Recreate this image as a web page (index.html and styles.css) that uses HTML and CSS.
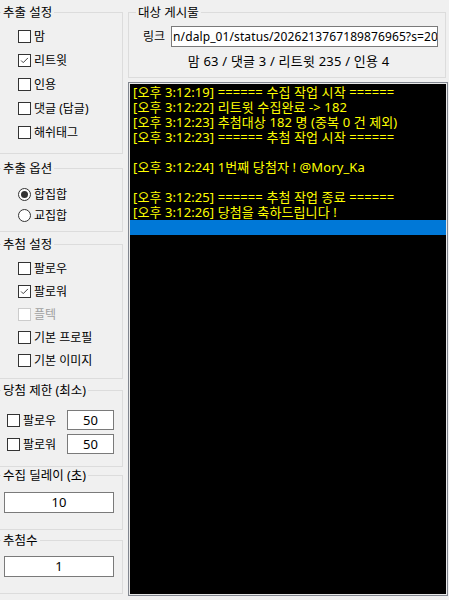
FILE: index.html
```html
<!DOCTYPE html>
<html lang="ko">
<head>
    <meta charset="UTF-8">
    <meta name="viewport" content="width=device-width, initial-scale=1.0">
    <title>추첨기</title>
    <link rel="stylesheet" href="styles.css">
</head>
<body>
    <div class="app">
        <div class="side">
            <fieldset class="group g-extract">
                <legend>추출 설정</legend>
                <div class="rows rows-24">
                    <label class="opt"><span class="box"></span>맘</label>
                    <label class="opt"><span class="box"><svg viewBox="0 0 13 13"><path d="M2.5 6.5 L5 9 L10.5 3.5" fill="none" stroke="#333" stroke-width="1.1"/></svg></span>리트윗</label>
                    <label class="opt"><span class="box"></span>인용</label>
                    <label class="opt"><span class="box"></span>댓글 (답글)</label>
                    <label class="opt"><span class="box"></span>해쉬태그</label>
                </div>
            </fieldset>

            <fieldset class="group g-option">
                <legend>추출 옵션</legend>
                <div class="rows rows-21">
                    <label class="opt"><span class="radio on"></span>합집합</label>
                    <label class="opt"><span class="radio"></span>교집합</label>
                </div>
            </fieldset>

            <fieldset class="group g-draw">
                <legend>추첨 설정</legend>
                <div class="rows rows-23">
                    <label class="opt"><span class="box"></span>팔로우</label>
                    <label class="opt"><span class="box"><svg viewBox="0 0 13 13"><path d="M2.5 6.5 L5 9 L10.5 3.5" fill="none" stroke="#333" stroke-width="1.1"/></svg></span>팔로워</label>
                    <label class="opt disabled"><span class="box"></span>플텍</label>
                    <label class="opt"><span class="box"></span>기본 프로필</label>
                    <label class="opt"><span class="box"></span>기본 이미지</label>
                </div>
            </fieldset>

            <fieldset class="group g-limit">
                <legend>당첨 제한 (최소)</legend>
                <div class="rows rows-24">
                    <div class="limit-row">
                        <label class="opt"><span class="box"></span>팔로우</label>
                        <div class="field num small">50</div>
                    </div>
                    <div class="limit-row">
                        <label class="opt"><span class="box"></span>팔로워</label>
                        <div class="field num small">50</div>
                    </div>
                </div>
            </fieldset>

            <fieldset class="group g-delay">
                <legend>수집 딜레이 (초)</legend>
                <div class="field num wide">10</div>
            </fieldset>

            <fieldset class="group g-count">
                <legend>추첨수</legend>
                <div class="field num wide">1</div>
            </fieldset>
        </div>

        <div class="main">
            <fieldset class="group g-target">
                <legend>대상 게시물</legend>
                <div class="link-row">
                    <span class="link-label">링크</span>
                    <div class="field link">n/dalp_01/status/2026213767189876965?s=20</div>
                </div>
                <div class="stats">맘 63 / 댓글 3 / 리트윗 235 / 인용 4</div>
            </fieldset>

            <div class="log">
                <div class="line">[오후 3:12:19] ====== 수집 작업 시작 ======</div>
                <div class="line">[오후 3:12:22] 리트윗 수집완료 -&gt; 182</div>
                <div class="line">[오후 3:12:23] 추첨대상 182 명 (중복 0 건 제외)</div>
                <div class="line">[오후 3:12:23] ====== 추첨 작업 시작 ======</div>
                <div class="line"></div>
                <div class="line">[오후 3:12:24] 1번째 당첨자 ! @Mory_Ka</div>
                <div class="line"></div>
                <div class="line">[오후 3:12:25] ====== 추첨 작업 종료 ======</div>
                <div class="line">[오후 3:12:26] 당첨을 축하드립니다 !</div>
                <div class="line selected"></div>
            </div>
        </div>
    </div>
</body>
</html>
```

FILE: styles.css
```css
body {
    margin: 0;
    background-color: #f0f0f0;
    font-family: "Noto Sans", "Noto Sans CJK KR", sans-serif;
    font-size: 12px;
    color: #000;
}
.app {
    display: flex;
    gap: 5px;
    height: 600px;
    overflow: hidden;
}
.side {
    width: 123px;
    flex: none;
    display: flex;
    flex-direction: column;
}
.main {
    width: 320px;
    flex: none;
    display: flex;
    flex-direction: column;
}

/* group boxes */
.group {
    box-sizing: border-box;
    margin: 0;
    padding: 0;
    min-width: 0;
    border: 1px solid #dcdcdc;
}
.side .group {
    border-left: none;
}
.group legend {
    padding: 0 2px;
    margin-left: 1px;
    line-height: 15px;
    font-size: 12.5px;
}
.g-extract { margin-top: 5px; height: 149px; }
.g-option  { margin-top: 7px; height: 71px; }
.g-draw    { margin-top: 5px; height: 142px; }
.g-limit   { margin-top: 4px; height: 84px; }
.g-delay   { margin-top: 1px; height: 62px; }
.g-count   { margin-top: 3px; height: 61px; }

.g-extract .rows { padding-top: 4px; }
.g-option .rows  { padding-top: 8px; }
.g-draw .rows    { padding-top: 5px; }
.g-limit .rows   { padding-top: 10px; }
.g-delay .field  { margin-top: 9px; }
.g-count .field  { margin-top: 8px; }

.rows {
    display: flex;
    flex-direction: column;
}
.rows-24 > * { height: 24px; }
.rows-23 > * { height: 23px; }
.rows-21 > * { height: 21px; }

/* check boxes and radios */
.opt {
    display: flex;
    align-items: center;
    gap: 3px;
    padding-left: 18px;
    line-height: 15px;
    white-space: nowrap;
}
.box {
    width: 13px;
    height: 13px;
    box-sizing: border-box;
    border: 1px solid #333;
    background-color: #fff;
    flex: none;
    display: flex;
}
.box svg {
    width: 11px;
    height: 11px;
    margin: 0;
}
.opt.disabled {
    color: #a0a0a0;
}
.opt.disabled .box {
    border-color: #cccccc;
}
.radio {
    width: 13px;
    height: 13px;
    box-sizing: border-box;
    border: 1px solid #333;
    border-radius: 50%;
    background-color: #fff;
    flex: none;
    display: flex;
    align-items: center;
    justify-content: center;
}
.radio.on::after {
    content: "";
    width: 7px;
    height: 7px;
    border-radius: 50%;
    background-color: #333;
}

/* text fields */
.field {
    box-sizing: border-box;
    background-color: #fff;
    border: 1px solid #7a7a7a;
    white-space: nowrap;
    overflow: hidden;
}
.field.num {
    text-align: center;
    font-size: 13px;
}
.field.small {
    width: 47px;
    height: 20px;
    line-height: 18px;
}
.field.wide {
    width: 110px;
    height: 21px;
    line-height: 19px;
    margin-left: 4px;
}
.limit-row {
    display: flex;
    align-items: center;
}
.limit-row .opt {
    padding-left: 7px;
    width: 60px;
}

/* target post */
.g-target {
    margin-top: 5px;
    height: 73px;
    width: 318px;
}
.g-target legend {
    margin-left: 7px;
}
.link-row {
    display: flex;
    align-items: center;
    margin-top: 6px;
    padding-left: 14px;
    gap: 6px;
}
.link-label {
    line-height: 15px;
}
.field.link {
    width: 267px;
    height: 21px;
    line-height: 19px;
    font-size: 12px;
    padding-left: 1px;
    letter-spacing: 0.1px;
}
.stats {
    margin-top: 6px;
    line-height: 16px;
    font-size: 13px;
    letter-spacing: 0.2px;
    text-align: center;
    padding-left: 3px;
}

/* log */
.log {
    margin-top: 4px;
    height: 514px;
    box-sizing: border-box;
    border: 1px solid #828790;
    padding: 1px 0 0 0;
    background-color: #000;
    box-shadow: inset 0 0 0 1px #e8e8e8;
    color: #ffff00;
    font-size: 13px;
    letter-spacing: 0.1px;
}
.line {
    height: 15px;
    line-height: 15px;
    padding-left: 3px;
    margin: 0 1px;
    white-space: nowrap;
}
.line:first-child {
    margin-top: 1px;
}
.line.selected {
    background-color: #0078d7;
}
```
